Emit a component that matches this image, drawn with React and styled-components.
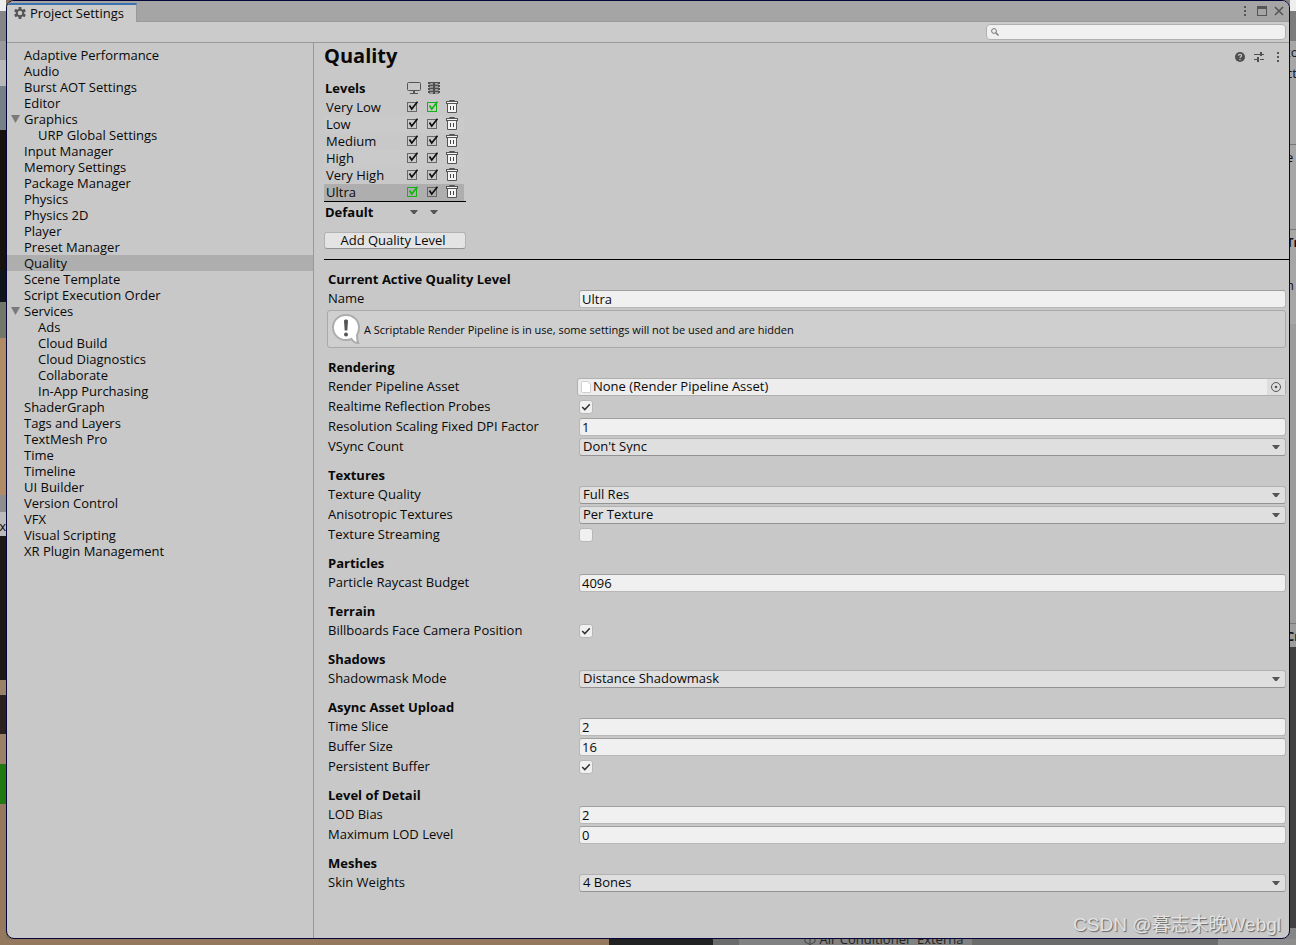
import React, { useState } from "react";
import styled, { createGlobalStyle } from "styled-components";

const GlobalStyle = createGlobalStyle`
    * {
        box-sizing: border-box;
    }
    body {
        margin: 0;
        font-family: "Open Sans", "Noto Sans", sans-serif;
        font-size: 13px;
        color: #090909;
    }
    button, input, select {
        font: inherit;
        color: inherit;
        margin: 0;
    }
`

const menu = [
    { name: "Adaptive Performance" },
    { name: "Audio" },
    { name: "Burst AOT Settings" },
    { name: "Editor" },
    { name: "Graphics", open: true },
    { name: "URP Global Settings", child: true },
    { name: "Input Manager" },
    { name: "Memory Settings" },
    { name: "Package Manager" },
    { name: "Physics" },
    { name: "Physics 2D" },
    { name: "Player" },
    { name: "Preset Manager" },
    { name: "Quality" },
    { name: "Scene Template" },
    { name: "Script Execution Order" },
    { name: "Services", open: true },
    { name: "Ads", child: true },
    { name: "Cloud Build", child: true },
    { name: "Cloud Diagnostics", child: true },
    { name: "Collaborate", child: true },
    { name: "In-App Purchasing", child: true },
    { name: "ShaderGraph" },
    { name: "Tags and Layers" },
    { name: "TextMesh Pro" },
    { name: "Time" },
    { name: "Timeline" },
    { name: "UI Builder" },
    { name: "Version Control" },
    { name: "VFX" },
    { name: "Visual Scripting" },
    { name: "XR Plugin Management" },
]

// def = which platform column uses this level by default
const levels = [
    { name: "Very Low", def: 1 },
    { name: "Low" },
    { name: "Medium" },
    { name: "High" },
    { name: "Very High" },
    { name: "Ultra", def: 0 },
]

const sections = [
    {
        title: "Textures",
        rows: [
            { label: "Texture Quality", type: "select", value: "Full Res" },
            { label: "Anisotropic Textures", type: "select", value: "Per Texture" },
            { label: "Texture Streaming", type: "check", value: false },
        ],
    },
    {
        title: "Particles",
        rows: [{ label: "Particle Raycast Budget", type: "text", value: "4096" }],
    },
    {
        title: "Terrain",
        rows: [{ label: "Billboards Face Camera Position", type: "check", value: true }],
    },
    {
        title: "Shadows",
        rows: [{ label: "Shadowmask Mode", type: "select", value: "Distance Shadowmask" }],
    },
    {
        title: "Async Asset Upload",
        rows: [
            { label: "Time Slice", type: "text", value: "2" },
            { label: "Buffer Size", type: "text", value: "16" },
            { label: "Persistent Buffer", type: "check", value: true },
        ],
    },
    {
        title: "Level of Detail",
        rows: [
            { label: "LOD Bias", type: "text", value: "2" },
            { label: "Maximum LOD Level", type: "text", value: "0" },
        ],
    },
    {
        title: "Meshes",
        rows: [{ label: "Skin Weights", type: "select", value: "4 Bones" }],
    },
]

/* icons */

const GearIcon = () => (
    <svg width="12" height="12" viewBox="0 0 12 12" aria-hidden="true">
        <g fill="#555">
            <rect x="4.6" y="0" width="2.8" height="12" />
            <rect x="4.6" y="0" width="2.8" height="12" transform="rotate(60 6 6)" />
            <rect x="4.6" y="0" width="2.8" height="12" transform="rotate(120 6 6)" />
        </g>
        <circle cx="6" cy="6" r="3.3" fill="#cbcbcb" stroke="#555" strokeWidth="2" />
    </svg>
)

const DotsIcon = () => (
    <svg width="10" height="12" viewBox="0 0 10 12" fill="#555" aria-hidden="true">
        <rect x="4" y="1" width="2" height="2" />
        <rect x="4" y="5" width="2" height="2" />
        <rect x="4" y="9" width="2" height="2" />
    </svg>
)

const MaximizeIcon = () => (
    <svg width="10" height="10" viewBox="0 0 10 10" aria-hidden="true">
        <rect x="0.5" y="0.5" width="9" height="9" fill="none" stroke="#555" />
        <rect width="10" height="3" fill="#555" />
    </svg>
)

const CloseIcon = () => (
    <svg width="10" height="10" viewBox="0 0 10 10" aria-hidden="true">
        <path d="M1 1L9 9M9 1L1 9" stroke="#555" strokeWidth="1.6" />
    </svg>
)

const SearchIcon = () => (
    <svg width="8" height="8" viewBox="0 0 8 8" aria-hidden="true">
        <circle cx="3" cy="3" r="2.4" fill="none" stroke="#777" />
        <path d="M4.8 4.8L7.5 7.5" stroke="#777" strokeWidth="1.4" />
    </svg>
)

const HelpIcon = () => (
    <svg width="10" height="10" viewBox="0 0 10 10" aria-hidden="true">
        <circle cx="5" cy="5" r="5" fill="#4f4f4f" />
        <path d="M3.4 3.8C3.4 1.8 6.6 1.8 6.6 3.8C6.6 4.8 5 4.9 5 6" fill="none" stroke="#c8c8c8" strokeWidth="1.2" />
        <rect x="4.4" y="7" width="1.2" height="1.2" fill="#c8c8c8" />
    </svg>
)

const PresetIcon = () => (
    <svg width="10" height="10" viewBox="0 0 10 10" fill="#4f4f4f" aria-hidden="true">
        <rect y="2" width="6" height="1" />
        <rect x="6" y="0" width="2" height="4" />
        <rect x="8" y="2" width="2" height="1" />
        <rect y="7" width="3" height="1" />
        <rect x="3" y="5" width="2" height="5" />
        <rect x="6" y="7" width="4" height="1" />
    </svg>
)

const MonitorIcon = () => (
    <svg width="14" height="12" viewBox="0 0 14 12" aria-hidden="true">
        <rect x="0.5" y="0.5" width="13" height="8" rx="1" fill="none" stroke="#555" />
        <rect x="6" y="9" width="2" height="2" fill="#555" />
        <rect x="3" y="11" width="8" height="1" fill="#555" />
    </svg>
)

const ServerIcon = () => (
    <svg width="14" height="12" viewBox="-1 0 14 12" aria-hidden="true">
        {[0, 3, 6, 9].map((y) => (
            <g key={y}>
                <rect y={y} width="12" height="2" fill="#4f4f4f" />
                <rect y={y + 2} x="1" width="10" height="1" fill="#8c8c8c" />
                <rect x="2" y={y + 1} width="3" height="1" fill="#a0a0a0" />
                <rect x="7" y={y + 1} width="3" height="1" fill="#a0a0a0" />
            </g>
        ))}
        <rect x="5" y="0" width="2" height="12" fill="#4f4f4f" />
    </svg>
)

const TrashIcon = () => (
    <svg width="12" height="13" viewBox="0 0 12 13" aria-hidden="true">
        <path d="M3.5 2.5V0.5H8.5V2.5" fill="#f4f4f4" stroke="#555" />
        <path d="M1.5 3.5H10.5V12.5H1.5Z" fill="#f4f4f4" stroke="#555" />
        <rect x="0.5" y="1.5" width="11" height="2" fill="#f4f4f4" stroke="#555" />
        <path d="M4.5 6V10M7.5 6V10" stroke="#444" />
    </svg>
)

const LevelTick = ({ color, on }) => (
    <svg width="12" height="12" viewBox="0 0 12 12" aria-hidden="true">
        <rect x="0.5" y="1.5" width="9" height="9" fill="none" stroke={color ? color : "#666"} />
        {on && <path d="M2.5 4.5L4.7 8L10.5 0.8" fill="none" stroke={color ? color : "#111"} strokeWidth="1.7" />}
    </svg>
)

const Tick = () => (
    <svg width="10" height="10" viewBox="0 0 10 10" aria-hidden="true">
        <path d="M1.2 5L3.8 7.6L8.8 2.2" fill="none" stroke="#333" strokeWidth="1.5" />
    </svg>
)

const Arrow = () => (
    <svg width="8" height="4" viewBox="0 0 8 4" aria-hidden="true">
        <path d="M0 0H8L4.8 4H3.2Z" fill="#555" />
    </svg>
)

const Foldout = () => (
    <svg width="9" height="8" viewBox="0 0 9 8" aria-hidden="true">
        <path d="M0 0H9L4.5 8Z" fill="#7a7a7a" />
    </svg>
)

const InfoIcon = () => (
    <svg width="30" height="32" viewBox="0 0 30 32" aria-hidden="true">
        <path d="M15 2C7.5 2 2 7.5 2 14.5S7.5 27 15 27C17 27 19 26.7 20.5 26C22 28.5 24.5 30 27.2 30C26.3 28 26 25 26 22C27.4 20 28 17.5 28 14.5C28 7.5 22.5 2 15 2Z" fill="#fff" stroke="#acacac" strokeWidth="2" />
        <path d="M13 8C13 6 17 6 17 8L16.3 17.5H13.7Z" fill="#555" />
        <circle cx="15" cy="21.5" r="2" fill="#555" />
    </svg>
)

const PageIcon = () => (
    <svg width="10" height="12" viewBox="0 0 10 12" aria-hidden="true">
        <path d="M1.5 0.5H6.5L9.5 3.5V11.5H1.5Q0.5 11.5 0.5 10.5V1.5Q0.5 0.5 1.5 0.5Z" fill="#fff" stroke="#cfcfcf" />
    </svg>
)

const TargetIcon = () => (
    <svg width="10" height="10" viewBox="0 0 10 10" aria-hidden="true">
        <circle cx="5" cy="5" r="4.5" fill="none" stroke="#555" />
        <circle cx="5" cy="5" r="1.3" fill="#555" />
    </svg>
)

const CubeIcon = () => (
    <svg width="12" height="12" viewBox="0 0 12 12" aria-hidden="true">
        <path d="M6 1L11 3.5V9L6 11.5L1 9V3.5ZM1 3.5L6 6L11 3.5M6 6V11.5" fill="none" stroke="#444" />
    </svg>
)

const Row = ({ row }) => {
    const [value, setValue] = useState(row.value)
    const id = row.label.toLowerCase().replace(/ /g, "-")

    return (
        <Field>
            <label htmlFor={id}>{row.label}</label>
            {row.type === "text" && (
                <TextInput id={id} type="text" value={value} onChange={(e) => setValue(e.target.value)} />
            )}
            {row.type === "select" && (
                <SelectBox>
                    <Select id={id} defaultValue={value}>
                        <option>{value}</option>
                    </Select>
                    <Arrow />
                </SelectBox>
            )}
            {row.type === "check" && (
                <CheckBox>
                    <Check id={id} type="checkbox" checked={value} onChange={(e) => setValue(e.target.checked)} />
                    {value && <Tick />}
                </CheckBox>
            )}
        </Field>
    )
}

const LevelCheck = ({ label, color }) => {
    const [on, setOn] = useState(true)
    return (
        <LevelBox>
            <LevelInput type="checkbox" aria-label={label} checked={on} onChange={() => setOn(!on)} />
            <LevelTick on={on} color={color} />
        </LevelBox>
    )
}

const Levels = () => (
    <LevelTable>
        <thead>
            <tr>
                <LevelName as="th">Levels</LevelName>
                <LevelCell as="th"><MonitorIcon /></LevelCell>
                <LevelCell as="th"><ServerIcon /></LevelCell>
                <LevelCell as="td" />
            </tr>
        </thead>
        <tbody>
            {levels.map((level, i) => (
                <LevelRow key={level.name} $odd={i % 2 === 1} $active={level.name === "Ultra"}>
                    <LevelName>{level.name}</LevelName>
                    {["Standalone", "Server"].map((platform, n) => (
                        <LevelCell key={platform}>
                            <LevelCheck label={level.name + " " + platform} color={level.def === n ? "#12b312" : ""} />
                        </LevelCell>
                    ))}
                    <LevelCell $tight>
                        <IconButton aria-label={"Delete " + level.name}><TrashIcon /></IconButton>
                    </LevelCell>
                </LevelRow>
            ))}
        </tbody>
    </LevelTable>
)

const App = () => {
    const [current, setCurrent] = useState("Quality")

    return (
        <Desktop>
            <GlobalStyle />
            <SceneEdge>
                <span>x</span>
            </SceneEdge>
            <Window>
                <TitleBar>
                    <Tab>
                        <GearIcon />
                        Project Settings
                    </Tab>
                    <WindowButtons>
                        <IconButton aria-label="Window menu"><DotsIcon /></IconButton>
                        <IconButton aria-label="Maximize"><MaximizeIcon /></IconButton>
                        <IconButton aria-label="Close"><CloseIcon /></IconButton>
                    </WindowButtons>
                </TitleBar>
                <Toolbar>
                    <SearchBox>
                        <SearchIcon />
                        <input type="text" aria-label="Search settings" />
                    </SearchBox>
                </Toolbar>
                <Body>
                    <Sidebar>
                        {menu.map((item) => (
                            <MenuItem
                                key={item.name}
                                href="#"
                                $child={item.child}
                                $active={item.name === current}
                                onClick={() => setCurrent(item.name)}
                            >
                                <FoldoutSlot>{item.open && <Foldout />}</FoldoutSlot>
                                {item.name}
                            </MenuItem>
                        ))}
                    </Sidebar>
                    <Main>
                        <Header>
                            <h1>Quality</h1>
                            <HeaderButtons>
                                <IconButton aria-label="Help"><HelpIcon /></IconButton>
                                <IconButton aria-label="Presets"><PresetIcon /></IconButton>
                                <IconButton aria-label="More"><DotsIcon /></IconButton>
                            </HeaderButtons>
                        </Header>
                        <LevelPanel>
                            <Levels />
                            <DefaultRow>
                                <b>Default</b>
                                <IconButton aria-label="Default for Standalone"><Arrow /></IconButton>
                                <IconButton aria-label="Default for Server"><Arrow /></IconButton>
                            </DefaultRow>
                            <AddButton>Add Quality Level</AddButton>
                        </LevelPanel>
                        <Rule />
                        <Form>
                            <SectionTitle>Current Active Quality Level</SectionTitle>
                            <Row row={{ label: "Name", type: "text", value: "Ultra" }} />
                            <HelpBox>
                                <InfoIcon />
                                A Scriptable Render Pipeline is in use, some settings will not be used and are hidden
                            </HelpBox>
                            <SectionTitle>Rendering</SectionTitle>
                            <Field>
                                <label htmlFor="asset">Render Pipeline Asset</label>
                                <ObjectField>
                                    <PageIcon />
                                    <input id="asset" type="text" readOnly value="None (Render Pipeline Asset)" />
                                    <PickButton aria-label="Pick asset"><TargetIcon /></PickButton>
                                </ObjectField>
                            </Field>
                            <Row row={{ label: "Realtime Reflection Probes", type: "check", value: true }} />
                            <Row row={{ label: "Resolution Scaling Fixed DPI Factor", type: "text", value: "1" }} />
                            <Row row={{ label: "VSync Count", type: "select", value: "Don't Sync" }} />
                            {sections.map((section) => (
                                <React.Fragment key={section.title}>
                                    <SectionTitle>{section.title}</SectionTitle>
                                    {section.rows.map((row) => <Row key={row.label} row={row} />)}
                                </React.Fragment>
                            ))}
                        </Form>
                    </Main>
                </Body>
                <Watermark>CSDN @暮志未晚Webgl</Watermark>
            </Window>
            <InspectorEdge>
                <EdgeText $h={61}>to</EdgeText>
                <EdgeText $h={21}>ct</EdgeText>
                <EdgeText $h={84} $line>e</EdgeText>
                <EdgeText $h={85} $line><b>Tr</b></EdgeText>
                <EdgeText $h={43}>n</EdgeText>
                <EdgeText $h={351} $line><b>Cr</b></EdgeText>
            </InspectorEdge>
            <ProjectEdge>
                <CubeIcon />
                Air Conditioner_Externa
            </ProjectEdge>
        </Desktop>
    )
}

/* the editor that shows around the window */

const Desktop = styled.div`
    display: grid;
    grid-template-columns: 6px minmax(0, 1fr) 6px;
    grid-template-rows: 1fr 6px;
    min-height: 100vh;
    background: linear-gradient(to right, #85705b 50%, #858585 50%);
`
const SceneEdge = styled.div`
    overflow: hidden;
    padding-top: 518px;
    line-height: 16px;
    background: linear-gradient(
        #eee 0 11px, #858585 11px 41px, #999 41px 60px, #b8b8b8 60px 86px, #777f88 86px 130px,
        #16130f 130px 270px, #10151b 270px 302px, #747868 302px 338px, #b08b63 338px 495px,
        #8d8d8d 495px 512px, #bbb 512px 536px, #1c1916 536px 680px, #9a8168 680px 695px,
        #2b2220 695px 734px, #9a8168 734px 764px, #1f7a10 764px 804px, #94795f 804px
    );
    span {
        float: right;
    }
`
const InspectorEdge = styled.div`
    overflow: hidden;
    background: linear-gradient(#eee 0 11px, #7c7c7c 11px 41px, #a6a6a6 41px 324px, #9c9c9c 324px 647px, #414141 647px 928px, #858585 928px);
`
// the start of each label is hidden under the window
const EdgeText = styled.div`
    display: flex;
    align-items: flex-end;
    height: ${(props) => props.$h}px;
    margin-left: -4px;
    line-height: 18px;
    color: #111;
    background: ${(props) => (props.$line ? "linear-gradient(#777, #777) bottom 21px left / 100% 1px no-repeat" : "none")};
`
const ProjectEdge = styled.div`
    grid-column: 1 / -1;
    display: flex;
    align-items: flex-end;
    gap: 4px;
    height: 6px;
    padding-left: 62%;
    overflow: hidden;
    line-height: 12px;
    color: #222;
    background: linear-gradient(to right, #94795f 47%, #222 47% 55%, #6c6c6c 55% 57%, #828282 57% 75%, #6c6c6c 75% 94%, #8d8d8d 94%);
`

/* window */

const Window = styled.div`
    position: relative;
    display: flex;
    flex-direction: column;
    overflow: hidden;
    background: #c8c8c8;
    border: 1px solid #05053a;
    border-radius: 8px;
`
const TitleBar = styled.div`
    display: flex;
    justify-content: space-between;
    height: 21px;
    background: #a5a5a5;
    border-bottom: 1px solid #999;
`
const Tab = styled.div`
    display: flex;
    align-items: center;
    gap: 4px;
    height: 19px;
    margin-top: 2px;
    padding: 0 12px 1px 7px;
    background: #cbcbcb;
    border-top: 2px solid #3a72b0;
    border-right: 1px solid #999;
`
const WindowButtons = styled.div`
    display: flex;
    align-items: center;
    gap: 7px;
    padding-right: 5px;
`
const IconButton = styled.button`
    display: flex;
    align-items: center;
    justify-content: center;
    padding: 0;
    border: 0;
    background: none;
`
const Toolbar = styled.div`
    display: flex;
    justify-content: flex-end;
    height: 21px;
    padding: 2px 3px;
    background: #cbcbcb;
    border-bottom: 1px solid #999;
`
const SearchBox = styled.div`
    display: flex;
    align-items: center;
    gap: 4px;
    width: 300px;
    height: 16px;
    padding-left: 4px;
    background: #f0f0f0;
    border: 1px solid #b0b0b0;
    border-radius: 4px;
    input {
        flex: 1;
        min-width: 0;
        height: 12px;
        padding: 0;
        border: 0;
        outline: 0;
        background: none;
    }
`
const Body = styled.div`
    display: flex;
    flex: 1;
`
const Sidebar = styled.nav`
    width: 307px;
    flex-shrink: 0;
    padding-top: 4px;
    border-right: 1px solid #999;
`
const MenuItem = styled.a`
    display: flex;
    align-items: center;
    height: 16px;
    padding-left: ${(props) => (props.$child ? "18px" : "4px")};
    line-height: 16px;
    color: inherit;
    text-decoration: none;
    background: ${(props) => (props.$active ? "#aeaeae" : "none")};
`
const FoldoutSlot = styled.span`
    display: flex;
    width: 13px;
`
const Main = styled.main`
    flex: 1;
    min-width: 0;
    padding-left: 10px;
`
const Header = styled.div`
    display: flex;
    align-items: center;
    justify-content: space-between;
    height: 28px;
    padding-right: 6px;
    h1 {
        margin: 0;
        font-size: 20px;
        line-height: 26px;
        padding-bottom: 2px;
    }
`
const HeaderButtons = styled.div`
    display: flex;
    align-items: center;
    gap: 9px;
`
const LevelPanel = styled.div`
    width: 142px;
    padding-top: 8px;
`
const LevelTable = styled.table`
    width: 140px;
    table-layout: fixed;
    border-collapse: collapse;
    thead tr {
        height: 20px;
    }
    th:first-child {
        padding: 0 0 2px 1px;
    }
`
const LevelRow = styled.tr`
    height: 17px;
    background: ${(props) => (props.$active ? "#aeaeae" : props.$odd ? "#cacaca" : "none")};
`
const LevelName = styled.td`
    width: 80px;
    padding: 0 0 0 2px;
    line-height: 17px;
    text-align: left;
    white-space: nowrap;
`
const LevelCell = styled.td`
    width: 20px;
    padding: 0 0 2px ${(props) => (props.$tight ? "2px" : "3px")};
    line-height: 0;
    svg {
        display: block;
    }
`
const LevelBox = styled.span`
    display: grid;
    svg {
        grid-area: 1 / 1;
        pointer-events: none;
    }
`
const LevelInput = styled.input`
    grid-area: 1 / 1;
    width: 16px;
    height: 12px;
    appearance: none;
`
const DefaultRow = styled.div`
    display: grid;
    grid-template-columns: 79px 20px 20px;
    align-items: center;
    height: 20px;
    padding-left: 1px;
    border-top: 1px solid #000;
`
const AddButton = styled.button`
    width: 100%;
    height: 17px;
    margin-top: 11px;
    padding: 0 4px 1px 0;
    line-height: 14px;
    background: #e4e4e4;
    border: 1px solid #b2b2b2;
    border-bottom-color: #939393;
    border-radius: 3px;
`
const Rule = styled.hr`
    height: 1px;
    margin: 10px 0 2px;
    border: 0;
    background: #000;
`
const Form = styled.form`
    padding: 0 3px 30px 4px;
`
const SectionTitle = styled.h2`
    margin: 0;
    padding: 8px 0 2px;
    font-size: 13px;
    line-height: 18px;
`
const Field = styled.div`
    display: grid;
    grid-template-columns: 251px minmax(0, 1fr);
    align-items: center;
    height: 18px;
    margin-bottom: 2px;
    label {
        padding-bottom: 2px;
        line-height: 16px;
        white-space: nowrap;
    }
`
const TextInput = styled.input`
    width: 100%;
    height: 18px;
    padding: 0 2px;
    background: #f0f0f0;
    border: 1px solid #b7b7b7;
    border-top-color: #a0a0a0;
    border-radius: 3px;
`
const SelectBox = styled.div`
    display: grid;
    align-items: center;
    svg {
        grid-area: 1 / 1;
        justify-self: end;
        margin-right: 6px;
        pointer-events: none;
    }
`
const Select = styled.select`
    grid-area: 1 / 1;
    width: 100%;
    height: 18px;
    padding: 0 20px 2px 3px;
    line-height: 14px;
    appearance: none;
    background: #dfdfdf;
    border: 1px solid #b2b2b2;
    border-bottom-color: #939393;
    border-radius: 3px;
`
const CheckBox = styled.span`
    display: grid;
    justify-content: start;
    place-items: center;
    svg {
        grid-area: 1 / 1;
        pointer-events: none;
    }
`
const Check = styled.input`
    grid-area: 1 / 1;
    width: 14px;
    height: 14px;
    appearance: none;
    background: #f0f0f0;
    border: 1px solid #b7b7b7;
    border-radius: 3px;
`
const HelpBox = styled.div`
    display: flex;
    align-items: center;
    gap: 3px;
    height: 38px;
    margin: 0 0 2px -1px;
    padding-left: 3px;
    font-size: 11px;
    background: #cfcfcf;
    border: 1px solid #a9a9a9;
    border-radius: 3px;
`
const ObjectField = styled.div`
    display: flex;
    align-items: center;
    height: 18px;
    margin-left: -2px;
    padding-left: 3px;
    background: #ededed;
    border: 1px solid #b0b0b0;
    border-radius: 3px;
    input {
        flex: 1;
        min-width: 0;
        height: 16px;
        padding: 0 2px 2px;
        border: 0;
        outline: 0;
        background: none;
    }
`
const PickButton = styled(IconButton)`
    width: 18px;
    height: 16px;
    background: #dedede;
`
// lies over the bottom right corner of the window
const Watermark = styled.div`
    position: absolute;
    right: 8px;
    bottom: 0;
    font-family: "Liberation Sans", "Noto Sans CJK SC", sans-serif;
    font-size: 19px;
    line-height: 26px;
    color: #e2e2e2;
    text-shadow: 1px 1px 1px #666;
    pointer-events: none;
`

export default App;
